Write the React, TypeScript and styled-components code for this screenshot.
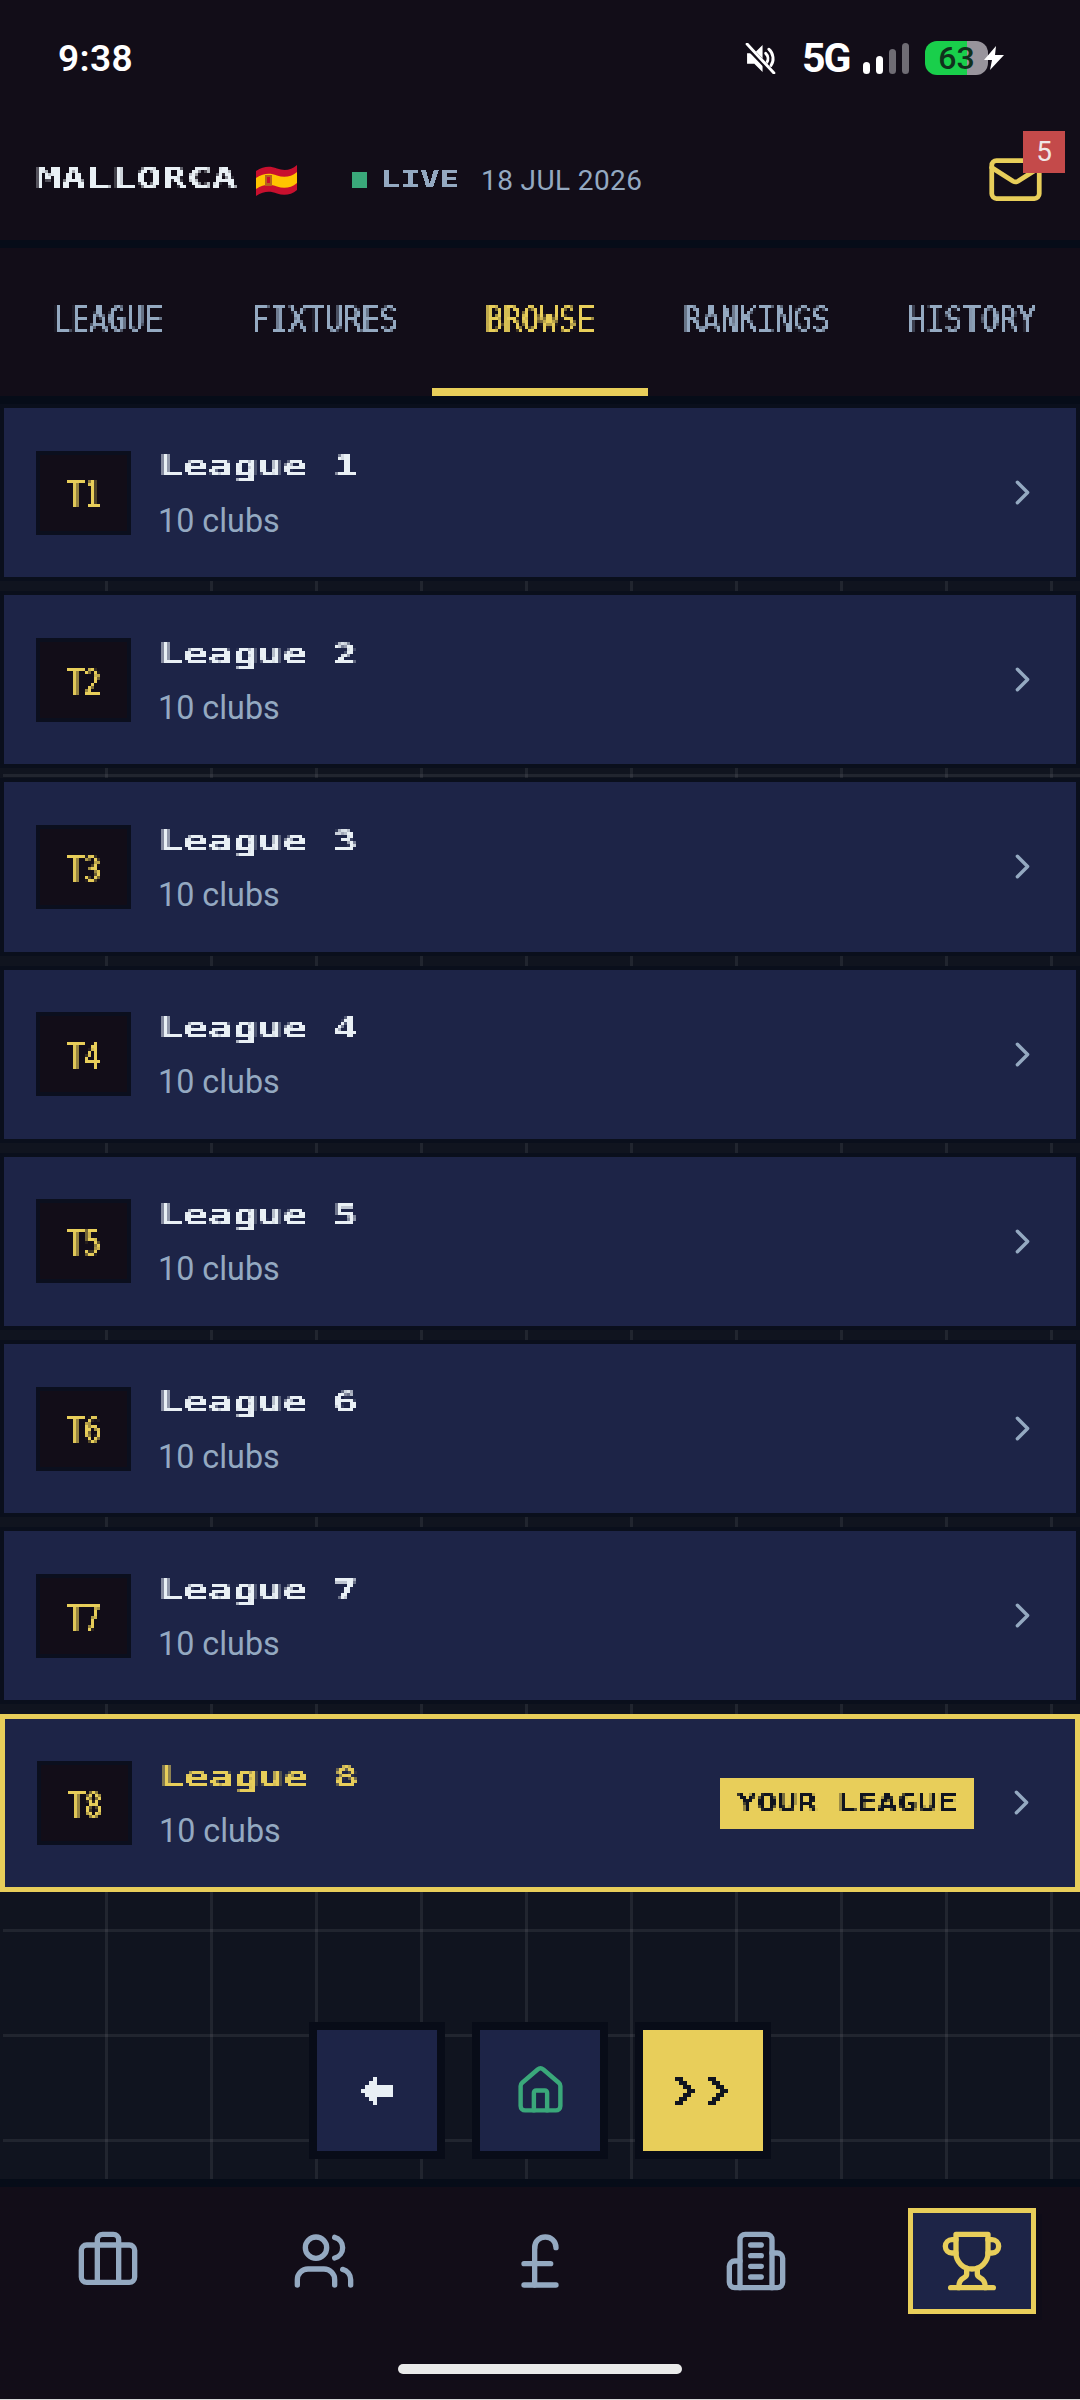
import React from 'react';
import styled, {createGlobalStyle} from 'styled-components';
import {Briefcase, ChevronRight, House, Mail, PoundSterling, Users} from 'lucide-react';

const YELLOW = '#e8ce5a';
const SLATE = '#94a9c1';
const WHITE = '#e9f0f5';
const INK = '#120d18';
const NAVY = '#1d2447';
const EDGE = '#060c18';

const TABS = ['LEAGUE', 'FIXTURES', 'BROWSE', 'RANKINGS', 'HISTORY'];
const LEAGUES = [1, 2, 3, 4, 5, 6, 7, 8];

const GlobalStyle = createGlobalStyle`
  html, body { margin: 0; padding: 0; background: ${INK}; }
  * { box-sizing: border-box; }
  body { font-family: Roboto, "Liberation Sans", sans-serif; }
`;

const Screen = styled.div`
  width: 1080px;
  height: 2400px;
  display: flex;
  flex-direction: column;
  overflow: hidden;
  background: ${INK};
  border-bottom: 1px solid #d8d8d8;
`;

const Filters = styled.svg`
  position: absolute;
  width: 0;
  height: 0;
`;

const Top = styled.header`
  height: 248px;
  flex: none;
  border-bottom: 8px solid ${EDGE};
`;

const StatusBar = styled.div`
  height: 116px;
  padding: 0 75px 0 58px;
  display: flex;
  align-items: center;
  color: #fff;
`;

const Clock = styled.span`
  font: 600 37px Roboto, sans-serif;
  letter-spacing: 0.4px;
`;

const StatusRight = styled.div`
  margin-left: auto;
  display: flex;
  align-items: center;
`;

const Network = styled.span`
  margin: 0 16px 0 26px;
  font: 700 41px/1 Roboto, sans-serif;
  letter-spacing: -2px;
  width: 45px;
`;

const Signal = styled.div`
  display: flex;
  align-items: flex-end;
  gap: 6px;
  height: 31px;
  margin-right: 16px;
`;

const SignalBar = styled.i<{$h: number; $off?: boolean}>`
  width: 7px;
  height: ${p => p.$h}px;
  border-radius: 4px;
  background: ${p => (p.$off ? '#6f6c74' : '#fff')};
`;

const Battery = styled.div`
  width: 63px;
  height: 34px;
  border-radius: 12px;
  background: linear-gradient(90deg, #19cf4b 0 66.5%, #98949c 66.5% 100%);
  color: #10301c;
  font: 500 32px/34px Roboto, sans-serif;
  text-align: center;
`;

const Bolt = styled.svg`
  width: 22px;
  height: 24px;
  margin-left: -5px;
`;

const TitleRow = styled.div`
  height: 124px;
  padding: 0 36px;
  display: flex;
  align-items: center;
`;

/* wrapper does the pixelating, inner text gets stretched to the pixel font's width */
const Pixel = styled.div<{$w?: number; $f?: string}>`
  ${p => (p.$w ? `width: ${p.$w}px;` : 'width: 100%;')}
  flex: none;
  filter: url(#${p => p.$f || 'px3'});
`;

const Glyphs = styled.span<{$size: number; $sx: number; $center?: boolean; $thin?: boolean}>`
  display: inline-block;
  white-space: nowrap;
  font: ${p => (p.$thin ? 400 : 700)} ${p => p.$size}px/1.25 "DejaVu Sans Mono", "Liberation Mono", monospace;
  transform: scaleX(${p => p.$sx});
  transform-origin: ${p => (p.$center ? 'center' : 'left')} center;
  ${p => p.$thin && 'text-shadow: 0.8px 0 0 currentColor;'}
`;

const Club = styled(Pixel)`
  color: ${WHITE};
`;

const Flag = styled.svg`
  width: 43px;
  height: 31px;
  flex: none;
  margin-top: 4px;
`;

const LiveDot = styled.i`
  width: 15px;
  height: 16px;
  margin: 4px 14px 0 54px;
  background: #3aa87a;
  flex: none;
`;

const Live = styled(Pixel)`
  color: ${SLATE};
  margin-top: 2px;
`;

const DateText = styled.span`
  margin: 4px 0 0 14px;
  font: 400 28px Roboto, sans-serif;
  letter-spacing: 0.4px;
  color: ${SLATE};
`;

const MailButton = styled.div`
  position: relative;
  margin: 2px 0 0 auto;
  width: 57px;
  height: 57px;
  color: ${YELLOW};
`;

const MailBadge = styled.span`
  position: absolute;
  left: 36px;
  top: -20px;
  width: 42px;
  height: 42px;
  background: #c44a4a;
  color: #f0e6e6;
  font: 400 28px/42px Roboto, sans-serif;
  text-align: center;
`;

const TabBar = styled.nav`
  height: 156px;
  flex: none;
  display: grid;
  grid-template-columns: repeat(5, 1fr);
  border-bottom: 8px solid ${EDGE};
`;

const Tab = styled.div<{$active?: boolean}>`
  position: relative;
  padding-top: 51px;
  text-align: center;
  color: ${p => (p.$active ? YELLOW : SLATE)};
  border-bottom: 8px solid ${p => (p.$active ? YELLOW : 'transparent')};
`;

const Main = styled.main`
  flex: 1;
  min-height: 0;
  display: flex;
  flex-direction: column;
  border-left: 3px solid #10141f;
  background-color: #10141f;
  background-image:
    linear-gradient(rgba(255, 255, 255, 0.07) 3px, transparent 3px),
    linear-gradient(90deg, rgba(255, 255, 255, 0.07) 3px, transparent 3px);
  background-size: 105px 105px;
  background-origin: padding-box;
  background-clip: padding-box;
  background-position: 102px 55px;
  padding-bottom: 20px;
`;

const List = styled.div`
  margin-left: -3px;
  display: flex;
  flex-direction: column;
  gap: 10px;
`;

const Row = styled.div<{$mine?: boolean}>`
  height: 177.2px;
  padding: 0 33px 0 32px;
  display: flex;
  align-items: center;
  background: ${NAVY};
  border: ${p => (p.$mine ? `5px solid ${YELLOW}` : '4px solid #0a0f1c')};
`;

const TierBox = styled.div`
  width: 95px;
  height: 84px;
  flex: none;
  display: flex;
  align-items: center;
  justify-content: center;
  padding-top: 5px;
  background: ${INK};
  border: 4px solid #0b0f1e;
  color: ${YELLOW};
  text-align: center;
`;

const RowText = styled.div`
  flex: 1;
  min-width: 0;
  margin: 4px 0 0 27px;
  display: flex;
  flex-direction: column;
  gap: 16px;
`;

const LeagueName = styled(Pixel)<{$mine?: boolean}>`
  color: ${p => (p.$mine ? YELLOW : WHITE)};
`;

const Clubs = styled.span`
  font: 400 32.3px/40px Roboto, sans-serif;
  color: ${SLATE};
`;

const YourLeague = styled.div`
  width: 254px;
  height: 51px;
  flex: none;
  margin: 2px 27px 0 0;
  padding: 9px 0 0 17px;
  background: ${YELLOW};
  color: #10141f;
`;

const Chevron = styled(ChevronRight)`
  width: 41px;
  height: 41px;
  flex: none;
  color: ${SLATE};
`;

const Actions = styled.div`
  margin: auto 0 0 -3px;
  display: flex;
  justify-content: center;
  gap: 27px;
`;

const ActionButton = styled.div<{$primary?: boolean}>`
  width: 136px;
  height: 137px;
  display: flex;
  align-items: center;
  justify-content: center;
  border: 8px solid #080c18;
  background: ${p => (p.$primary ? YELLOW : NAVY)};
  color: #3aa87a;
`;

const PixelIcon = styled.svg<{$nudge?: number}>`
  display: block;
  shape-rendering: crispEdges;
  margin-left: ${p => p.$nudge || 0}px;
`;

const BottomNav = styled.nav`
  flex: none;
  height: 220px;
  border-top: 8px solid ${EDGE};
  display: flex;
  flex-direction: column;
`;

const NavItems = styled.div`
  padding-top: 21px;
  display: grid;
  grid-template-columns: repeat(5, 1fr);
`;

const NavItem = styled.div<{$active?: boolean}>`
  justify-self: center;
  width: 128px;
  height: 106px;
  display: flex;
  align-items: center;
  justify-content: center;
  color: ${p => (p.$active ? YELLOW : SLATE)};
  ${p => p.$active && `
    background: ${NAVY};
    border: 5px solid ${YELLOW};
    box-shadow: 6px 6px 0 rgba(6, 12, 24, 0.25);
  `}
`;

const HomeBar = styled.div`
  width: 284px;
  height: 10px;
  margin: 50px auto 0;
  border-radius: 5px;
  background: #eaeaea;
`;

const PixelFilters = () => (
  <Filters aria-hidden="true">
    <defs>
      <filter id="px3" x="0" y="0" width="100%" height="100%" colorInterpolationFilters="sRGB">
        <feFlood x="1" y="1" width="1" height="1" />
        <feComposite width="3" height="3" />
        <feTile result="grid" />
        <feComposite in="SourceGraphic" in2="grid" operator="in" />
        <feMorphology operator="dilate" radius="1" />
      </filter>
      <filter id="crisp" x="0" y="0" width="100%" height="100%" colorInterpolationFilters="sRGB">
        <feComponentTransfer>
          <feFuncA type="discrete" tableValues="0 1 1" />
        </feComponentTransfer>
      </filter>
    </defs>
  </Filters>
);

const MuteIcon = () => (
  <svg width="31" height="31" viewBox="0 0 30 30">
    <path d="M2 10h7l8-8v26l-8-8H2z" fill="#fff" />
    <path d="M20 10a7 7 0 0 1 1 9M23 6a12 12 0 0 1 2 16" fill="none" stroke="#fff" strokeWidth="2.8" strokeLinecap="round" />
    <path d="M2 3l25 26" stroke={INK} strokeWidth="5" />
    <path d="M2 1l26 28" stroke="#fff" strokeWidth="2.8" strokeLinecap="round" />
  </svg>
);

const SpainFlag = () => (
  <Flag viewBox="0 0 43 31">
    <path d="M1 6C9 1 15 1 22 3.500s14 2 20-3.500v25c-6 5-13 6-20 3.500S9 26 1 31z" fill="#c8102e" />
    <path d="M1 13C9 8 15 8 22 10.500s14 1.500 20-3.500v11c-6 5-13 6-20 3.500S9 19 1 24z" fill="#ffc400" />
    <rect x="10" y="10" width="7" height="11" fill="#b5651d" />
    <rect x="12" y="12" width="3" height="6" fill="#c8102e" />
  </Flag>
);

const BackArrow = () => (
  <PixelIcon width="32" height="28" viewBox="0 0 32 28" fill={WHITE}>
    <path d="M0 12h4V8h4V4h4V0h4v8h16v12H16v8h-4v-4H8v-4H4v-4H0z" />
  </PixelIcon>
);

const ForwardArrows = () => (
  <PixelIcon $nudge={-3} width="53" height="28" viewBox="0 0 53 28" fill="#10141f">
    <path d="M0 0h8v4h4v4h4v4h4v4h-4v4h-4v4H8v4H0v-4h4v-4h4v-4h4v-4H8V8H4V4H0z" />
    <path d="M33 0h8v4h4v4h4v4h4v4h-4v4h-4v4h-4v4h-8v-4h4v-4h4v-4h4v-4h-4V8h-4V4h-4z" />
  </PixelIcon>
);

const TowerIcon = () => (
  <svg width="64" height="64" viewBox="0 0 24 24" fill="none" stroke="currentColor" strokeWidth="2" strokeLinecap="round" strokeLinejoin="round">
    <path d="M6 22V4a2 2 0 0 1 2-2h8a2 2 0 0 1 2 2v18Z" />
    <path d="M6 12H4a2 2 0 0 0-2 2v6a2 2 0 0 0 2 2h2" />
    <path d="M18 9h2a2 2 0 0 1 2 2v9a2 2 0 0 1-2 2h-2" />
    <path d="M10 6h4M10 10h4M10 14h4M10 18h4" />
  </svg>
);

const CupIcon = () => (
  <svg width="64" height="64" viewBox="0 0 24 24" fill="none" stroke="currentColor" strokeWidth="2" strokeLinecap="round" strokeLinejoin="round">
    <path d="M6 9H4.5a2.5 2.5 0 0 1 0-5H6" />
    <path d="M18 9h1.5a2.5 2.5 0 0 0 0-5H18" />
    <path d="M4 22h16" />
    <path d="M10 14.66V17c0 .55-.47.98-.97 1.21C7.85 18.75 7 20.24 7 22" />
    <path d="M14 14.66V17c0 .55.47.98.97 1.21C16.15 18.75 17 20.24 17 22" />
    <path d="M18 2H6v7a6 6 0 0 0 12 0V2Z" />
  </svg>
);

const App = () => {
  return (
    <Screen>
      <GlobalStyle />
      <PixelFilters />

      <Top>
        <StatusBar>
          <Clock>9:38</Clock>
          <StatusRight>
            <MuteIcon />
            <Network>5G</Network>
            <Signal>
              <SignalBar $h={12} />
              <SignalBar $h={18} />
              <SignalBar $h={25} $off />
              <SignalBar $h={31} $off />
            </Signal>
            <Battery>63</Battery>
            <Bolt viewBox="0 0 22 24">
              <path d="M13 0L1 14h8L7 24l14-15h-9z" fill="#fff" />
            </Bolt>
          </StatusRight>
        </StatusBar>
        <TitleRow>
          <Club $w={219}>
            <Glyphs $size={28} $sx={1.49}>MALLORCA</Glyphs>
          </Club>
          <SpainFlag />
          <LiveDot />
          <Live $w={86} $f="crisp">
            <Glyphs $size={23} $sx={1.41}>LIVE</Glyphs>
          </Live>
          <DateText>18 JUL 2026</DateText>
          <MailButton>
            <Mail size={57} strokeWidth={2} />
            <MailBadge>5</MailBadge>
          </MailButton>
        </TitleRow>
      </Top>

      <TabBar>
        {TABS.map(tab => (
          <Tab key={tab} $active={tab === 'BROWSE'}>
            <Pixel>
              <Glyphs $size={33} $sx={0.92} $center $thin>{tab}</Glyphs>
            </Pixel>
          </Tab>
        ))}
      </TabBar>

      <Main>
        <List>
          {LEAGUES.map(n => (
            <Row key={n} $mine={n === 8}>
              <TierBox>
                <Pixel>
                  <Glyphs $size={33} $sx={0.85} $center $thin>{`T${n}`}</Glyphs>
                </Pixel>
              </TierBox>
              <RowText>
                <LeagueName $mine={n === 8}>
                  <Glyphs $size={29} $sx={1.43}>{`League ${n}`}</Glyphs>
                </LeagueName>
                <Clubs>10 clubs</Clubs>
              </RowText>
              {n === 8 && (
                <YourLeague>
                  <Pixel $w={235}>
                    <Glyphs $size={25} $sx={1.33}>YOUR LEAGUE</Glyphs>
                  </Pixel>
                </YourLeague>
              )}
              <Chevron strokeWidth={2} />
            </Row>
          ))}
        </List>
        <Actions>
          <ActionButton><BackArrow /></ActionButton>
          <ActionButton><House size={53} strokeWidth={2} /></ActionButton>
          <ActionButton $primary><ForwardArrows /></ActionButton>
        </Actions>
      </Main>

      <BottomNav>
        <NavItems>
          <NavItem><Briefcase size={64} strokeWidth={2} /></NavItem>
          <NavItem><Users size={64} strokeWidth={2} /></NavItem>
          <NavItem><PoundSterling size={64} strokeWidth={2} /></NavItem>
          <NavItem><TowerIcon /></NavItem>
          <NavItem $active><CupIcon /></NavItem>
        </NavItems>
        <HomeBar />
      </BottomNav>
    </Screen>
  );
};

export default App;
